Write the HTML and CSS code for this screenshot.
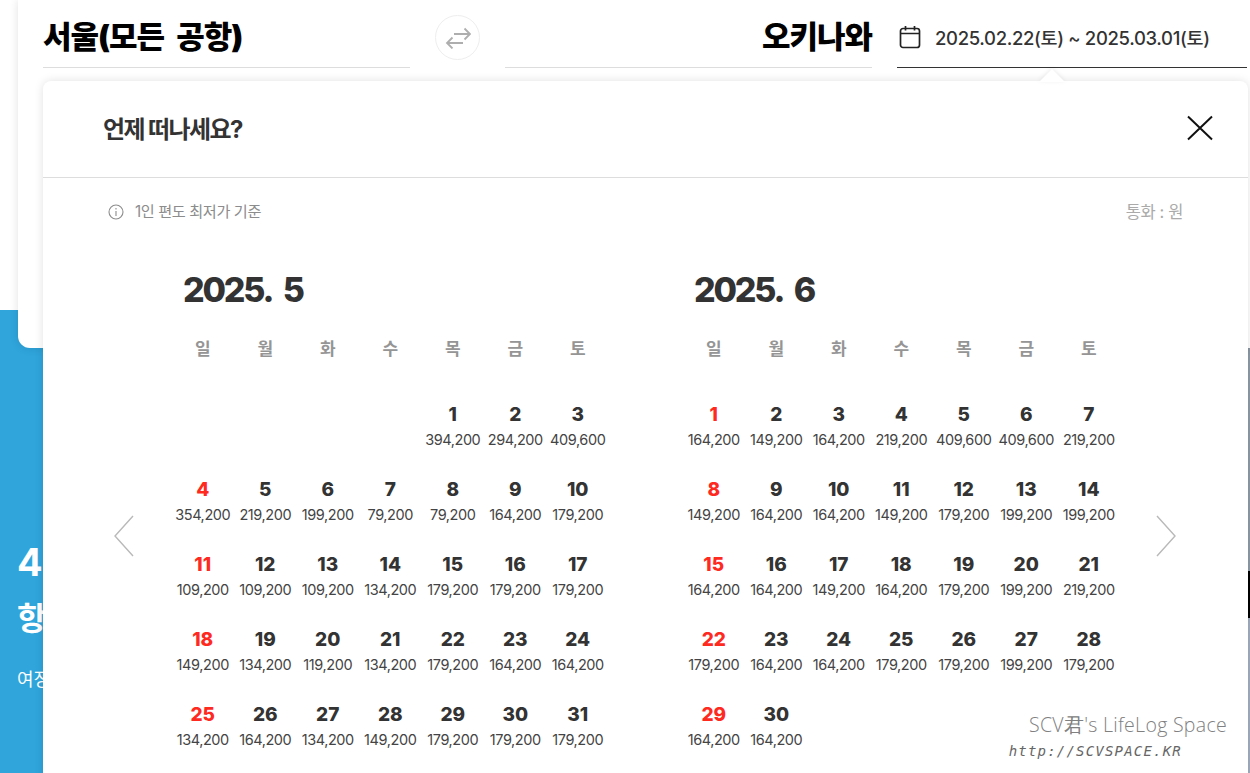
FILE: index.html
```html
<!DOCTYPE html>
<html lang="ko">
<head>
    <meta charset="UTF-8">
    <meta name="viewport" content="width=device-width, initial-scale=1.0">
    <title>언제 떠나세요?</title>
    <link rel="stylesheet" href="styles.css">
</head>
<body>
<div class="page">

    <div class="search-card">
        <div class="search-row">
            <div class="city">서울(모든 공항)</div>
            <div class="swap">
                <svg width="26" height="22" viewBox="0 0 26 22" fill="none" stroke="#aeaeae" stroke-width="1.8">
                    <path d="M9 7H25M19.5 1.5L25 7L19.5 12.5"/>
                    <path d="M18 16H2M7.5 10.5L2 16L7.5 21.5"/>
                </svg>
            </div>
            <div class="city city-to">오키나와</div>
            <div class="date-field">
                <svg width="22" height="24" viewBox="0 0 22 24" fill="none" stroke="#222" stroke-width="1.7">
                    <rect x="1.5" y="3.5" width="19" height="19" rx="2.5"/>
                    <path d="M1.5 8.5H20.5M6.5 1V5.5M15.5 1V5.5"/>
                </svg>
                <span>2025.02.22(토) ~ 2025.03.01(토)</span>
            </div>
        </div>
    </div>

    <div class="hero">
        <div class="hero-text">
            <div class="hero-num">4월</div>
            <div class="hero-title">항공권 특가</div>
            <div class="hero-sub">여정을 시작하세요</div>
        </div>
        <div class="hero-photo"></div>
    </div>

    <div class="popup">
        <div class="popup-head">
            <h2>언제 떠나세요?</h2>
            <svg class="close" width="28" height="28" viewBox="0 0 28 28" fill="none" stroke="#111" stroke-width="2">
                <path d="M2 2.5L26 25.5M26 2.5L2 25.5"/>
            </svg>
        </div>
        <div class="note">
            <div class="note-left">
                <svg width="16" height="16" viewBox="0 0 16 16" fill="none" stroke="#8c8c8c" stroke-width="1.1">
                    <circle cx="8" cy="8" r="7"/>
                    <path d="M8 7V12M8 4V5.4"/>
                </svg>
                <span>1인 편도 최저가 기준</span>
            </div>
            <span class="currency">통화 : 원</span>
        </div>

        <div class="months">
            <div class="month">
                <div class="month-title">2025.&nbsp; 5</div>
                <div class="week">
                    <span>일</span><span>월</span><span>화</span><span>수</span><span>목</span><span>금</span><span>토</span>
                </div>
                <div class="days">
                    <div class="day thu"><b>1</b><span>394,200</span></div>
                    <div class="day"><b>2</b><span>294,200</span></div>
                    <div class="day"><b>3</b><span>409,600</span></div>
                    <div class="day sun"><b>4</b><span>354,200</span></div>
                    <div class="day"><b>5</b><span>219,200</span></div>
                    <div class="day"><b>6</b><span>199,200</span></div>
                    <div class="day"><b>7</b><span>79,200</span></div>
                    <div class="day"><b>8</b><span>79,200</span></div>
                    <div class="day"><b>9</b><span>164,200</span></div>
                    <div class="day"><b>10</b><span>179,200</span></div>
                    <div class="day sun"><b>11</b><span>109,200</span></div>
                    <div class="day"><b>12</b><span>109,200</span></div>
                    <div class="day"><b>13</b><span>109,200</span></div>
                    <div class="day"><b>14</b><span>134,200</span></div>
                    <div class="day"><b>15</b><span>179,200</span></div>
                    <div class="day"><b>16</b><span>179,200</span></div>
                    <div class="day"><b>17</b><span>179,200</span></div>
                    <div class="day sun"><b>18</b><span>149,200</span></div>
                    <div class="day"><b>19</b><span>134,200</span></div>
                    <div class="day"><b>20</b><span>119,200</span></div>
                    <div class="day"><b>21</b><span>134,200</span></div>
                    <div class="day"><b>22</b><span>179,200</span></div>
                    <div class="day"><b>23</b><span>164,200</span></div>
                    <div class="day"><b>24</b><span>164,200</span></div>
                    <div class="day sun"><b>25</b><span>134,200</span></div>
                    <div class="day"><b>26</b><span>164,200</span></div>
                    <div class="day"><b>27</b><span>134,200</span></div>
                    <div class="day"><b>28</b><span>149,200</span></div>
                    <div class="day"><b>29</b><span>179,200</span></div>
                    <div class="day"><b>30</b><span>179,200</span></div>
                    <div class="day"><b>31</b><span>179,200</span></div>
                </div>
            </div>

            <div class="month">
                <div class="month-title">2025.&nbsp; 6</div>
                <div class="week">
                    <span>일</span><span>월</span><span>화</span><span>수</span><span>목</span><span>금</span><span>토</span>
                </div>
                <div class="days">
                    <div class="day sun"><b>1</b><span>164,200</span></div>
                    <div class="day"><b>2</b><span>149,200</span></div>
                    <div class="day"><b>3</b><span>164,200</span></div>
                    <div class="day"><b>4</b><span>219,200</span></div>
                    <div class="day"><b>5</b><span>409,600</span></div>
                    <div class="day"><b>6</b><span>409,600</span></div>
                    <div class="day"><b>7</b><span>219,200</span></div>
                    <div class="day sun"><b>8</b><span>149,200</span></div>
                    <div class="day"><b>9</b><span>164,200</span></div>
                    <div class="day"><b>10</b><span>164,200</span></div>
                    <div class="day"><b>11</b><span>149,200</span></div>
                    <div class="day"><b>12</b><span>179,200</span></div>
                    <div class="day"><b>13</b><span>199,200</span></div>
                    <div class="day"><b>14</b><span>199,200</span></div>
                    <div class="day sun"><b>15</b><span>164,200</span></div>
                    <div class="day"><b>16</b><span>164,200</span></div>
                    <div class="day"><b>17</b><span>149,200</span></div>
                    <div class="day"><b>18</b><span>164,200</span></div>
                    <div class="day"><b>19</b><span>179,200</span></div>
                    <div class="day"><b>20</b><span>199,200</span></div>
                    <div class="day"><b>21</b><span>219,200</span></div>
                    <div class="day sun"><b>22</b><span>179,200</span></div>
                    <div class="day"><b>23</b><span>164,200</span></div>
                    <div class="day"><b>24</b><span>164,200</span></div>
                    <div class="day"><b>25</b><span>179,200</span></div>
                    <div class="day"><b>26</b><span>179,200</span></div>
                    <div class="day"><b>27</b><span>199,200</span></div>
                    <div class="day"><b>28</b><span>179,200</span></div>
                    <div class="day sun"><b>29</b><span>164,200</span></div>
                    <div class="day"><b>30</b><span>164,200</span></div>
                </div>
            </div>
        </div>

        <svg class="arrow arrow-prev" width="22" height="44" viewBox="0 0 22 44" fill="none" stroke="#b9b9b9" stroke-width="1.4">
            <path d="M20 2L2 22L20 42"/>
        </svg>
        <svg class="arrow arrow-next" width="22" height="44" viewBox="0 0 22 44" fill="none" stroke="#b9b9b9" stroke-width="1.4">
            <path d="M2 2L20 22L2 42"/>
        </svg>
    </div>

    <div class="watermark">
        <div class="wm-name">SCV君's LifeLog Space</div>
        <div class="wm-url">http://SCVSPACE.KR</div>
    </div>

</div>
</body>
</html>
```

FILE: styles.css
```css
body {
    margin: 0;
    background-color: #fff;
    font-family: Inter, "Noto Sans CJK KR", sans-serif;
    color: #333;
}
.page {
    position: relative;
    height: 773px;
    overflow: hidden;
}

/* search card behind the popup */
.search-card {
    position: relative;
    z-index: 1;
    height: 348px;
    margin-left: 18px;
    margin-bottom: -38px;
    padding-left: 25px;
    background-color: #fff;
    border-radius: 0 0 0 12px;
    box-shadow: 0 0 10px rgba(0, 0, 0, 0.12);
    box-sizing: border-box;
}
.search-row {
    display: flex;
    width: 1204px;
    height: 68px;
}
.city {
    width: 367px;
    height: 68px;
    box-sizing: border-box;
    border-bottom: 1px solid #ddd;
    padding-top: 16px;
    font-size: 31px;
    line-height: 42px;
    font-weight: 900;
    letter-spacing: -1px;
    word-spacing: 7px;
    color: #000;
}
.city-to {
    text-align: right;
}
.swap {
    width: 45px;
    height: 45px;
    margin: 15px 25px 0;
    border: 1px solid #eee;
    border-radius: 50%;
    box-sizing: border-box;
    display: flex;
    align-items: center;
    justify-content: center;
}
.date-field {
    width: 350px;
    height: 68px;
    margin-left: 25px;
    box-sizing: border-box;
    border-bottom: 1px solid #333;
    padding: 7px 0 0 2px;
    display: flex;
    align-items: center;
    gap: 14px;
    font-size: 18.5px;
    font-weight: 500;
    letter-spacing: -0.35px;
    color: #333;
}

/* blue banner */
.hero {
    display: flex;
    height: 463px;
    background-color: #2fa5dc;
}
.hero-text {
    flex: 1;
    padding: 227px 0 0 17px;
    color: #fff;
}
.hero-num {
    font-size: 38px;
    line-height: 50px;
    font-weight: 700;
}
.hero-title {
    font-size: 32px;
    line-height: 48px;
    font-weight: 700;
    margin-top: 8px;
}
.hero-sub {
    font-size: 18px;
    line-height: 26px;
    margin-top: 24px;
}
.hero-photo {
    flex: none;
    width: 2px;
    background: linear-gradient(#8f9ba8 0, #8f9ba8 261px, #000 261px, #000 308px, #a3aec2 308px);
}

/* date popup */
.popup {
    position: absolute;
    z-index: 2;
    top: 81px;
    left: 43px;
    width: 1205px;
    height: 760px;
    background-color: #fff;
    border-radius: 8px 8px 0 0;
    box-shadow: 0 0 10px rgba(0, 0, 0, 0.12);
}
.popup:before {
    content: "";
    position: absolute;
    top: -12px;
    left: 996px;
    border-left: 13px solid transparent;
    border-right: 13px solid transparent;
    border-bottom: 13px solid #fff;
    filter: drop-shadow(0 -1px 2px rgba(0, 0, 0, 0.08));
}
.popup-head {
    height: 92px;
    border-bottom: 1px solid #ddd;
    padding: 0 34px 4px 60px;
    display: flex;
    align-items: center;
    justify-content: space-between;
}
.popup-head h2 {
    margin: 0;
    font-size: 24px;
    font-weight: 700;
    letter-spacing: -1.6px;
    color: #333;
}
.close {
    margin-top: 2px;
}
.note {
    display: flex;
    justify-content: space-between;
    padding: 24px 65px 0;
    font-size: 15.2px;
    line-height: 20px;
    letter-spacing: -0.4px;
}
.note-left {
    display: flex;
    align-items: center;
    gap: 11px;
    color: #8c8c8c;
}
.currency {
    font-size: 16.5px;
    color: #aaa;
}
.months {
    display: flex;
    gap: 73px;
    margin: 48px 0 0 128.5px;
}
.month {
    width: 438px;
}
.month-title {
    padding-left: 11.5px;
    font-size: 34px;
    line-height: 40px;
    font-weight: 800;
    letter-spacing: -2.2px;
    color: #333;
}
.week {
    display: grid;
    grid-template-columns: repeat(7, 62.5px);
    margin-top: 29px;
    font-size: 17px;
    line-height: 20px;
    font-weight: 700;
    color: #959595;
    text-align: center;
}
.days {
    display: grid;
    grid-template-columns: repeat(7, 62.5px);
    row-gap: 25px;
    margin-top: 42px;
}
.day {
    text-align: center;
}
.day b {
    display: block;
    font-size: 19px;
    line-height: 28px;
    font-weight: 800;
    color: #333;
}
.day span {
    display: block;
    font-size: 14.5px;
    line-height: 22px;
    letter-spacing: -0.42px;
    color: #444;
}
.day.thu {
    grid-column-start: 5;
}
.day.sun b {
    color: #ff2a1f;
}
.arrow {
    position: absolute;
    top: 433px;
}
.arrow-prev {
    left: 70px;
}
.arrow-next {
    left: 1112px;
}

/* blog watermark over the screenshot */
.watermark {
    position: absolute;
    z-index: 3;
    right: 23px;
    top: 711px;
    text-align: right;
    color: #808080;
}
.wm-name {
    font-family: "Open Sans", sans-serif;
    font-size: 19.5px;
    font-weight: 300;
    line-height: 28px;
    letter-spacing: 0.3px;
}
.wm-url {
    margin-right: 45px;
    font-family: "DejaVu Sans Mono", monospace;
    font-style: italic;
    font-size: 14px;
    line-height: 24px;
    letter-spacing: 1.2px;
    color: #666;
}
```
